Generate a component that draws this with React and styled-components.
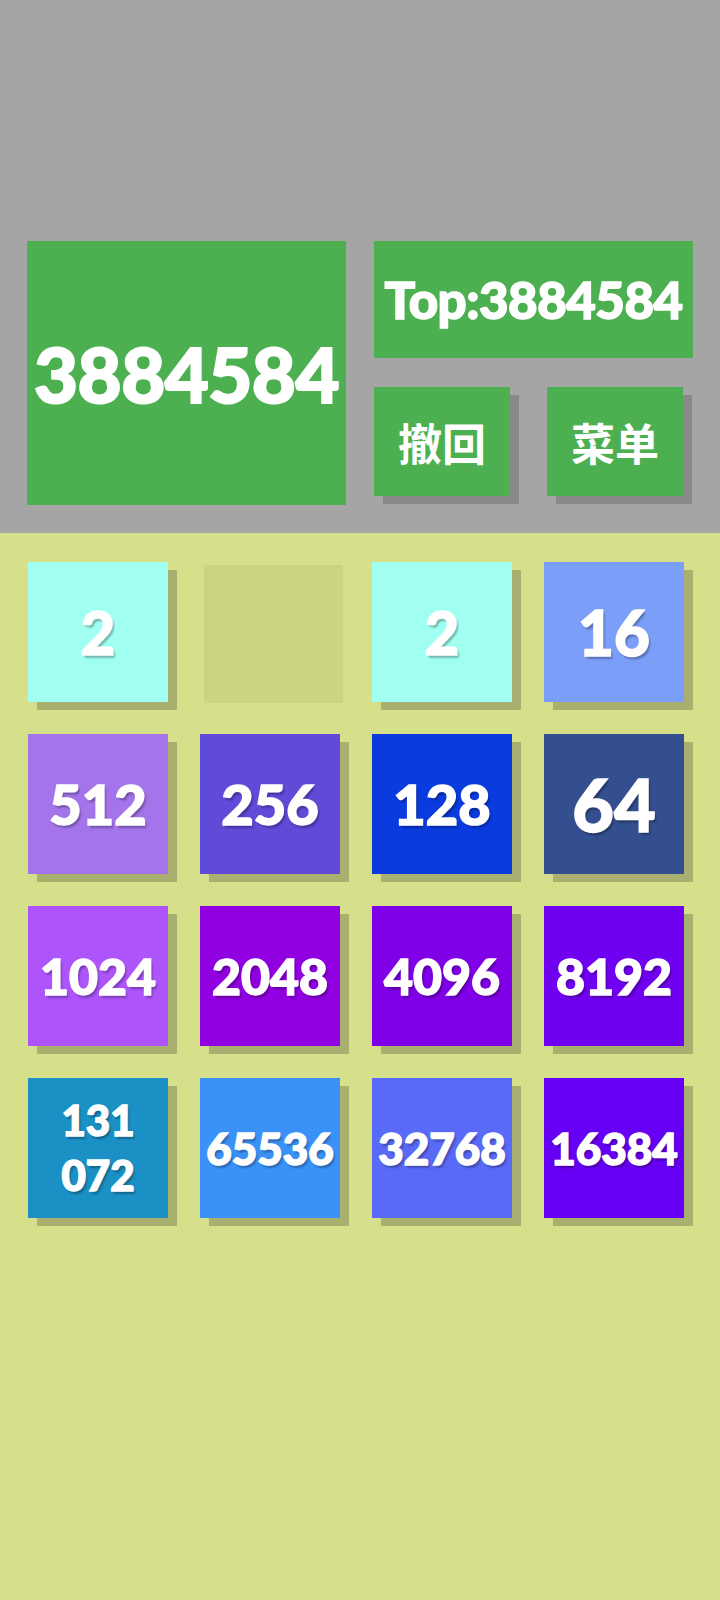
import React from "react";
import styled, { createGlobalStyle } from "styled-components";

const GlobalStyle = createGlobalStyle`
  html, body {
    margin: 0;
    padding: 0;
    background: #d6df8a;
  }
  * {
    box-sizing: border-box;
  }
`;

const Screen = styled.div`
  width: 720px;
  min-height: 1600px;
  background: #d6df8a;
  font-family: Lato, "Noto Sans", "Noto Sans CJK SC", sans-serif;
  color: #ffffff;
`;

const Header = styled.section`
  display: flex;
  gap: 28px;
  height: 533px;
  padding: 241px 0 0 27px;
  background: #a5a5a5;
`;

const ScoreBox = styled.div`
  display: flex;
  align-items: center;
  justify-content: center;
  width: 319px;
  height: 264px;
  background: #4caf50;
  font-size: 76px;
  font-weight: 900;
  letter-spacing: -0.5px;
  -webkit-text-stroke: 2px #ffffff;
`;

const RightColumn = styled.div`
  display: flex;
  flex-direction: column;
  gap: 29px;
  width: 319px;
`;

const TopBox = styled.div`
  display: flex;
  align-items: center;
  justify-content: center;
  height: 117px;
  background: #4caf50;
  font-size: 51px;
  font-weight: 900;
  letter-spacing: -0.5px;
  -webkit-text-stroke: 1.5px #ffffff;
`;

const ButtonRow = styled.div`
  display: flex;
  gap: 37px;
`;

const MenuButton = styled.button`
  display: flex;
  align-items: center;
  justify-content: center;
  width: 136px;
  height: 109px;
  padding: 0;
  border: none;
  background: #4caf50;
  box-shadow: 9px 8px 0 #898989;
  color: #ffffff;
  font-family: "Noto Sans CJK SC", sans-serif;
  font-size: 44px;
  font-weight: 700;
  cursor: pointer;
`;

const Board = styled.section`
  display: grid;
  grid-template-columns: repeat(4, 140px);
  grid-auto-rows: 140px;
  gap: 32px;
  padding: 29px 0 0 28px;
`;

const Tile = styled.div`
  display: flex;
  flex-direction: column;
  align-items: center;
  justify-content: center;
  text-align: center;
  background: ${(p) => p.$bg};
  box-shadow: 9px 8px 0 #a9af6f;
  font-size: ${(p) => p.$size}px;
  font-weight: 900;
  line-height: ${(p) => (p.$wrap ? 1.3 : 1)};
  -webkit-text-stroke: 1.5px #ffffff;
  text-shadow: 2px 3px 2px rgba(0, 0, 0, 0.28);
`;

const EmptyCell = styled.div`
  margin: 3px 0 0 4px;
  width: 139px;
  height: 138px;
  background: #cbd47f;
`;

const tiles = [
  { v: "2", bg: "#a0fff0", size: 60 },
  null,
  { v: "2", bg: "#a0fff0", size: 60 },
  { v: "16", bg: "#7b9ff8", size: 62 },
  { v: "512", bg: "#a474ea", size: 56 },
  { v: "256", bg: "#604ad8", size: 56 },
  { v: "128", bg: "#0a3bdf", size: 56 },
  { v: "64", bg: "#334f8f", size: 72 },
  { v: "1024", bg: "#ad55fb", size: 50 },
  { v: "2048", bg: "#9000e0", size: 50 },
  { v: "4096", bg: "#7f00e6", size: 50 },
  { v: "8192", bg: "#7000f0", size: 50 },
  { v: "131\n072", bg: "#1a90c4", size: 42, wrap: true },
  { v: "65536", bg: "#3a92f8", size: 44 },
  { v: "32768", bg: "#5a6af8", size: 44 },
  { v: "16384", bg: "#6600f5", size: 44 },
];

const App = () => {
  return (
    <Screen>
      <GlobalStyle />
      <Header>
        <ScoreBox>3884584</ScoreBox>
        <RightColumn>
          <TopBox>Top:3884584</TopBox>
          <ButtonRow>
            <MenuButton>撤回</MenuButton>
            <MenuButton>菜单</MenuButton>
          </ButtonRow>
        </RightColumn>
      </Header>
      <Board>
        {tiles.map((t, i) =>
          t ? (
            <Tile key={i} $bg={t.bg} $size={t.size} $wrap={t.wrap}>
              {t.wrap
                ? t.v.split("\n").map((line) => <div key={line}>{line}</div>)
                : t.v}
            </Tile>
          ) : (
            <EmptyCell key={i} />
          )
        )}
      </Board>
    </Screen>
  );
};

export default App;
